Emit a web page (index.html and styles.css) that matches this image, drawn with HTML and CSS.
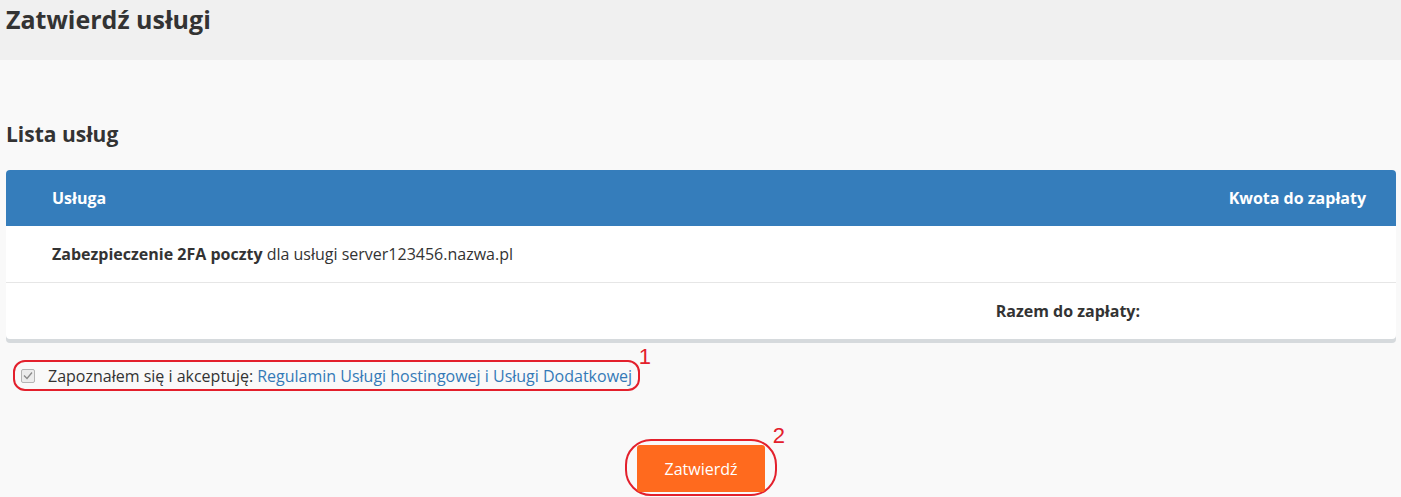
FILE: index.html
```html
<!DOCTYPE html>
<html>
<head>
<title>Zatwierdź usługi</title>
<link rel="stylesheet" href="styles.css">
</head>
<body>

<div class="page-head">
  <h1>Zatwierdź usługi</h1>
</div>

<div class="content">
  <h2>Lista usług</h2>

  <div class="services">
    <table>
      <tr class="head">
        <th class="name">Usługa</th>
        <th class="amount">Kwota do zapłaty</th>
      </tr>
      <tr>
        <td class="name"><b>Zabezpieczenie 2FA poczty</b> dla usługi server123456.nazwa.pl</td>
        <td class="amount"></td>
      </tr>
      <tr class="sum">
        <td class="sum-label" colspan="2"><b>Razem do zapłaty:</b></td>
      </tr>
    </table>
  </div>

  <div class="terms">
    <label class="terms-box">
      <span class="check">
        <svg width="10" height="9" viewBox="0 0 10 9"><path d="M1 4.5 L4 7.5 L9 1.5" fill="none" stroke="#8a8a8a" stroke-width="1.3"/></svg>
      </span>
      Zapoznałem się i akceptuję: <a href="#">Regulamin Usługi hostingowej i Usługi Dodatkowej</a>
      <span class="mark mark-1">1</span>
    </label>
  </div>

  <div class="actions">
    <div class="btn-ring">
      <button class="btn">Zatwierdź</button>
      <span class="mark mark-2">2</span>
    </div>
  </div>
</div>

</body>
</html>
```

FILE: styles.css
```css
body {
  margin: 0;
  background-color: #f9f9f9;
  font-family: "Open Sans", "Liberation Sans", sans-serif;
  font-size: 16px;
  color: #333;
}

.page-head {
  background-color: #f0f0f0;
  height: 60px;
  padding: 0 6px;
}

.page-head h1 {
  margin: 0;
  padding-top: 2px;
  font-size: 25px;
  line-height: 34px;
  font-weight: 700;
}

.content {
  padding: 0 5px 0 6px;
}

.content h2 {
  margin: 0;
  padding-top: 60px;
  font-size: 21px;
  line-height: 28px;
  font-weight: 700;
}

.services {
  margin-top: 22px;
  background-color: #fff;
  border-radius: 4px;
  overflow: hidden;
  box-shadow: 0 4px 0 #d6dadd;
}

.services table {
  width: 100%;
  border-collapse: collapse;
  font-size: 16px;
}

.services th,
.services td {
  height: 56px;
  padding: 0;
  text-align: left;
}

.services .name {
  padding-left: 46px;
}

.services .amount {
  text-align: right;
  padding-right: 30px;
}

tr.head {
  background-color: #357dbb;
  color: #fff;
}

tr.head th {
  font-size: 16px;
  font-weight: 700;
}

.services td {
  border-top: 1px solid #e6e6e6;
}

tr.head + tr td {
  border-top: 0;
}

.sum-label {
  text-align: right !important;
  padding-right: 256px !important;
}

.terms {
  padding: 21px 0 0 7px;
}

.terms-box {
  position: relative;
  display: inline-flex;
  align-items: center;
  gap: 13px;
  height: 27px;
  padding: 0 6px 0 6px;
  border: 2px solid #e3202c;
  border-radius: 12px;
  font-size: 16px;
  color: #333;
}

.terms-box a {
  color: #3479b7;
  text-decoration: none;
  margin-left: -9px;
}

.check {
  display: inline-flex;
  align-items: center;
  justify-content: center;
  width: 12px;
  height: 12px;
  border: 1px solid #b4b4b4;
  border-radius: 2px;
  background-color: #ececec;
}

.mark {
  position: absolute;
  color: #e3202c;
  font-family: "Liberation Sans", sans-serif;
  font-size: 22px;
  line-height: 22px;
}

.mark-1 {
  right: -13px;
  top: -16px;
}

.actions {
  display: flex;
  justify-content: center;
  padding-top: 48px;
}

.btn-ring {
  position: relative;
  padding: 4px 10px 2px 10px;
  border: 2px solid #e3202c;
  border-radius: 26px;
}

.btn {
  display: block;
  width: 128px;
  height: 47px;
  border: 0;
  border-radius: 3px;
  background-color: #ff6a1e;
  color: #fff;
  font-family: "Open Sans", "Liberation Sans", sans-serif;
  font-size: 16px;
}

.mark-2 {
  right: -10px;
  top: -16px;
}
```
